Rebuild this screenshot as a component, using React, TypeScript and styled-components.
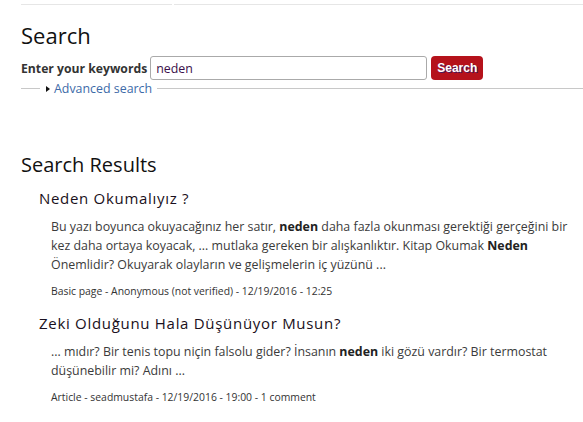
import React from "react";
import styled, { createGlobalStyle } from "styled-components";

const Global = createGlobalStyle`
  html, body { margin: 0; padding: 0; background: #fff; }
  body { font-family: "Open Sans", "Liberation Sans", sans-serif; color: #333; }
`;

const Page = styled.div`
  width: 583px;
  height: 422px;
  overflow: hidden;
  box-sizing: border-box;
`;

const TabBar = styled.div`
  display: flex;
  gap: 2px;
  padding: 4px 0 0 21px;
`;

const TabEdge = styled.div<{ $w?: number }>`
  height: 0;
  border-top: 1px solid #e6e6e6;
  ${(p) => (p.$w ? `width: ${p.$w}px;` : "flex: 1;")}
`;

const Main = styled.div`
  padding: 0 0 0 21px;
`;

const Title = styled.h1`
  margin: 15px 0 0;
  font-size: 22px;
  font-weight: 400;
  line-height: 30px;
  color: #111;
`;

const FormRow = styled.div`
  display: flex;
  align-items: center;
  margin-top: 6px;
  height: 24px;
`;

const Label = styled.label`
  font-size: 12.2px;
  font-weight: 700;
  color: #333;
  margin-right: 3px;
`;

const Input = styled.input`
  box-sizing: border-box;
  width: 277px;
  height: 24px;
  border: 1px solid #aaa;
  border-radius: 3px;
  padding: 0 5px;
  font-family: "Open Sans", sans-serif;
  font-size: 12.4px;
  color: #3a0f4a;
  outline: none;
`;

const Button = styled.button`
  margin-left: 4px;
  height: 24px;
  padding: 0 6px;
  border: none;
  border-radius: 4px;
  background: #b5121b;
  color: #fff;
  font-family: "Liberation Sans", Arial, sans-serif;
  font-weight: 700;
  font-size: 12px;
  text-shadow: 1px 1px 0 #4a1a5a;
`;

const Fieldset = styled.div`
  display: flex;
  align-items: center;
  margin-top: 1px;
  height: 15px;
`;

const Rule = styled.div<{ $w?: number }>`
  height: 0;
  border-top: 1px solid #c8c8c8;
  ${(p) => (p.$w ? `width: ${p.$w}px;` : "flex: 1;")}
`;

const Legend = styled.a`
  display: flex;
  align-items: center;
  padding: 0 5px 0 5px;
  font-size: 12.4px;
  color: #3d6aa8;
  text-decoration: none;
`;

const Arrow = styled.span`
  width: 0;
  height: 0;
  border-top: 3px solid transparent;
  border-bottom: 3px solid transparent;
  border-left: 4px solid #111;
  margin: 0 4px 0 1px;
`;

const ResultsTitle = styled.h2`
  margin: 55px 0 0;
  font-size: 20px;
  font-weight: 400;
  line-height: 28px;
  color: #111;
  letter-spacing: 0;
`;

const Results = styled.ol`
  list-style: none;
  margin: 0;
  padding: 0 11px 0 18px;
`;

const Result = styled.li`
  margin-top: 14px;
  &:first-child { margin-top: 9px; }
`;

const ResultTitle = styled.h3`
  margin: 0;
  font-size: 15px;
  font-weight: 400;
  letter-spacing: 0.7px;
  line-height: 20px;
  color: #1a1020;
`;

const Snippet = styled.p`
  margin: 9px 0 0 12px;
  font-size: 12.4px;
  line-height: 19px;
  color: #3b3b3b;
  b { color: #222; }
`;

const Meta = styled.p`
  margin: 9px 0 0 12px;
  font-size: 10.4px;
  line-height: 16px;
  color: #333;
`;

export default function App() {
  return (
    <Page>
      <Global />
      <TabBar>
        <TabEdge $w={151} />
        <TabEdge />
      </TabBar>
      <Main>
        <Title>Search</Title>
        <FormRow>
          <Label>Enter your keywords</Label>
          <Input defaultValue="neden" />
          <Button>Search</Button>
        </FormRow>
        <Fieldset>
          <Rule $w={19} />
          <Legend href="#">
            <Arrow />
            Advanced search
          </Legend>
          <Rule />
        </Fieldset>
        <ResultsTitle>Search Results</ResultsTitle>
        <Results>
          <Result>
            <ResultTitle>Neden Okumalıyız ?</ResultTitle>
            <Snippet>
              Bu yazı boyunca okuyacağınız her satır, <b>neden</b> daha fazla okunması gerektiği gerçeğini bir
              kez daha ortaya koyacak, ... mutlaka gereken bir alışkanlıktır. Kitap Okumak <b>Neden</b>{" "}
              Önemlidir? Okuyarak olayların ve gelişmelerin iç yüzünü ...
            </Snippet>
            <Meta>Basic page - Anonymous (not verified) - 12/19/2016 - 12:25</Meta>
          </Result>
          <Result>
            <ResultTitle>Zeki Olduğunu Hala Düşünüyor Musun?</ResultTitle>
            <Snippet>
              ... mıdır? Bir tenis topu niçin falsolu gider? İnsanın <b>neden</b> iki gözü vardır? Bir termostat
              düşünebilir mi? Adını ...
            </Snippet>
            <Meta>Article - seadmustafa - 12/19/2016 - 19:00 - 1 comment</Meta>
          </Result>
        </Results>
      </Main>
    </Page>
  );
}
